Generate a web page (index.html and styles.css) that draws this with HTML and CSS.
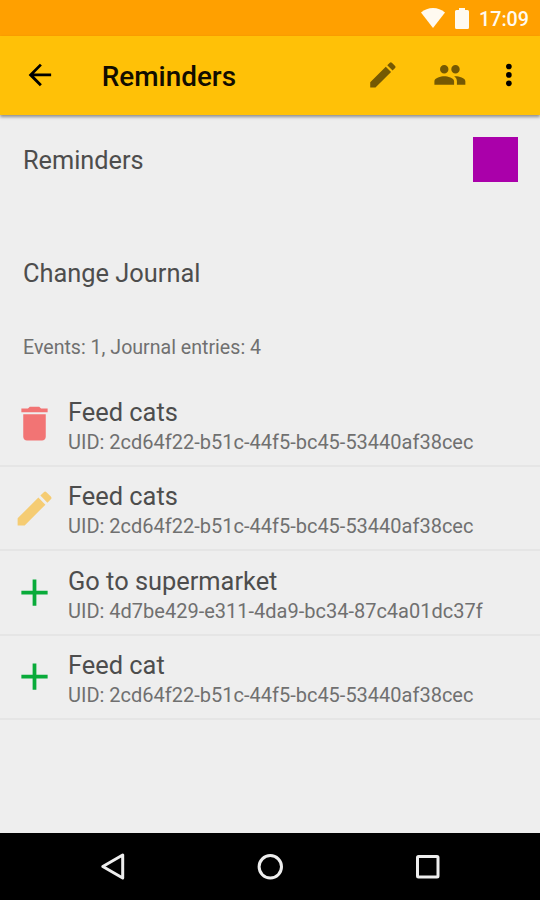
FILE: index.html
```html
<!DOCTYPE html>
<html lang="en">
  <head>
    <meta charset="utf-8">
    <title>Reminders</title>
    <link rel="stylesheet" href="styles.css">
  </head>
  <body>
    <svg class="sprite">
      <symbol id="pencil" viewBox="0 0 24 24">
        <path d="M3 17.25V21h3.75L17.81 9.94l-3.75-3.75L3 17.25zM20.71 7.04a1 1 0 0 0 0-1.41l-2.34-2.34a1 1 0 0 0-1.41 0l-1.83 1.83 3.75 3.75 1.83-1.83z"/>
      </symbol>
      <symbol id="plus" viewBox="0 0 24 24">
        <path d="M19 13h-6v6h-2v-6H5v-2h6V5h2v6h6v2z"/>
      </symbol>
    </svg>

    <div class="status-bar">
      <svg class="wifi" viewBox="0 0 24 20"><path d="M12 20L0 4.5C3.500 1.600 7.500 0 12 0s8.500 1.600 12 4.500z"/></svg>
      <svg class="battery" viewBox="0 0 14 21"><path d="M4 0h6v2h2.500Q14 2 14 3.500v16q0 1.500-1.500 1.500h-11Q0 21 0 19.500v-16Q0 2 1.500 2H4z"/></svg>
      <span class="clock">17:09</span>
    </div>

    <header class="app-bar">
      <svg class="icon back" viewBox="0 0 24 24"><path d="M20 11H7.830l5.590-5.590L12 4l-8 8 8 8 1.410-1.410L7.830 13H20v-2z"/></svg>
      <h1>Reminders</h1>
      <svg class="icon action"><use href="#pencil"/></svg>
      <svg class="icon action people" viewBox="0 0 24 24"><path d="M16 11c1.660 0 2.990-1.340 2.990-3S17.660 5 16 5s-3 1.340-3 3 1.340 3 3 3zm-8 0c1.660 0 2.990-1.340 2.990-3S9.660 5 8 5 5 6.340 5 8s1.340 3 3 3zm0 2c-2.330 0-7 1.170-7 3.500V19h14v-2.500c0-2.330-4.670-3.500-7-3.500zm8 0c-.290 0-.620.020-.970.050 1.160.840 1.970 1.970 1.970 3.450V19h6v-2.500c0-2.330-4.670-3.500-7-3.500z"/></svg>
      <svg class="icon more" viewBox="0 0 24 24"><circle cx="12" cy="6" r="2"/><circle cx="12" cy="12" r="2"/><circle cx="12" cy="18" r="2"/></svg>
    </header>

    <main>
      <div class="collection">
        <span class="title">Reminders</span>
        <div class="color"></div>
      </div>
      <h2>Change Journal</h2>
      <p class="stats">Events: 1, Journal entries: 4</p>

      <ul class="journal">
        <li>
          <svg class="delete" viewBox="0 0 24 24"><path d="M6 19c0 1.100.900 2 2 2h8c1.100 0 2-.900 2-2V7H6v12zM19 4h-3.500l-1-1h-5l-1 1H5v2h14V4z"/></svg>
          <div class="entry">
            <div class="name">Feed cats</div>
            <div class="uid">UID: 2cd64f22-b51c-44f5-bc45-53440af38cec</div>
          </div>
        </li>
        <li>
          <svg class="change"><use href="#pencil"/></svg>
          <div class="entry">
            <div class="name">Feed cats</div>
            <div class="uid">UID: 2cd64f22-b51c-44f5-bc45-53440af38cec</div>
          </div>
        </li>
        <li>
          <svg class="add"><use href="#plus"/></svg>
          <div class="entry">
            <div class="name">Go to supermarket</div>
            <div class="uid">UID: 4d7be429-e311-4da9-bc34-87c4a01dc37f</div>
          </div>
        </li>
        <li>
          <svg class="add"><use href="#plus"/></svg>
          <div class="entry">
            <div class="name">Feed cat</div>
            <div class="uid">UID: 2cd64f22-b51c-44f5-bc45-53440af38cec</div>
          </div>
        </li>
      </ul>
    </main>

    <nav>
      <svg viewBox="0 0 30 30"><path d="M4.800 14.500L24.700 3v23z"/></svg>
      <svg viewBox="0 0 30 30"><circle cx="15.300" cy="14.800" r="11.200"/></svg>
      <svg viewBox="0 0 30 30"><rect x="4.500" y="4.500" width="20.500" height="20.500" rx="1"/></svg>
    </nav>
  </body>
</html>
```

FILE: styles.css
```css
* {
  box-sizing: border-box;
}
body {
  display: flex;
  flex-direction: column;
  height: 900px;
  margin: 0;
  overflow: hidden;
  background-color: #eeeeee;
  color: #4d4d4d;
  font-family: Roboto, "Liberation Sans", sans-serif;
}
svg {
  flex: none;
}
.sprite {
  display: none;
}

/* Top bars */
.status-bar {
  display: flex;
  align-items: center;
  justify-content: flex-end;
  height: 36px;
  padding-right: 11px;
  background-color: #ffa000;
  color: #fffaf0;
  fill: #fffaf0;
}
.wifi {
  width: 24px;
  height: 20px;
}
.battery {
  width: 14px;
  height: 21px;
  margin: 0 10px 0 10px;
}
.clock {
  padding-top: 3px;
  font-size: 19.7px;
  font-weight: 500;
  line-height: 24px;
}
.app-bar {
  display: flex;
  align-items: center;
  height: 78.5px;
  padding: 0 14px 0 23px;
  background-color: #ffc107;
  box-shadow: 0 2px 3px rgba(0, 0, 0, 0.4);
}
.icon {
  width: 33.75px;
  height: 33.75px;
}
.app-bar h1 {
  flex: 1;
  margin: 3px 0 0 45px;
  color: #120d00;
  font-size: 27.9px;
  font-weight: 500;
  line-height: 34px;
}
.action {
  fill: #755903;
}
.people {
  margin: 0 25.5px 0 33.5px;
}

/* Content */
main {
  flex: 1;
}
.collection {
  display: flex;
  align-items: center;
  justify-content: space-between;
  height: 90px;
  padding: 0 22px 0 23px;
  font-size: 25.3px;
}
.title {
  padding-top: 2px;
}
.color {
  width: 45px;
  height: 45px;
  background-color: #aa00aa;
}
h2 {
  margin: 53px 0 0 23px;
  font-size: 25.4px;
  font-weight: 400;
  line-height: 30px;
}
.stats {
  margin: 48px 0 0 23px;
  color: #707070;
  font-size: 19.6px;
  line-height: 24px;
}
.journal {
  margin: 23.1px 0 0;
  padding: 0;
  list-style: none;
}
.journal li {
  display: flex;
  align-items: center;
  gap: 11px;
  height: 84.4px;
  padding-left: 12px;
  border-bottom: 2px solid #e5e5e5;
}
.journal svg {
  width: 45px;
  height: 45px;
}
.entry {
  padding-top: 4.6px;
}
.name {
  font-size: 25.4px;
  line-height: 32px;
}
.uid {
  color: #707070;
  font-size: 20px;
  line-height: 28px;
}
.delete {
  fill: #f27474;
}
.change {
  fill: #f5cc73;
}
.add {
  fill: #09ab3a;
}

/* System navigation */
nav {
  display: flex;
  align-items: center;
  justify-content: center;
  gap: 127.5px;
  height: 67px;
  background-color: #000;
}
nav svg {
  width: 30px;
  height: 30px;
  fill: none;
  stroke: #eee;
  stroke-width: 3;
  stroke-linejoin: round;
}
```
